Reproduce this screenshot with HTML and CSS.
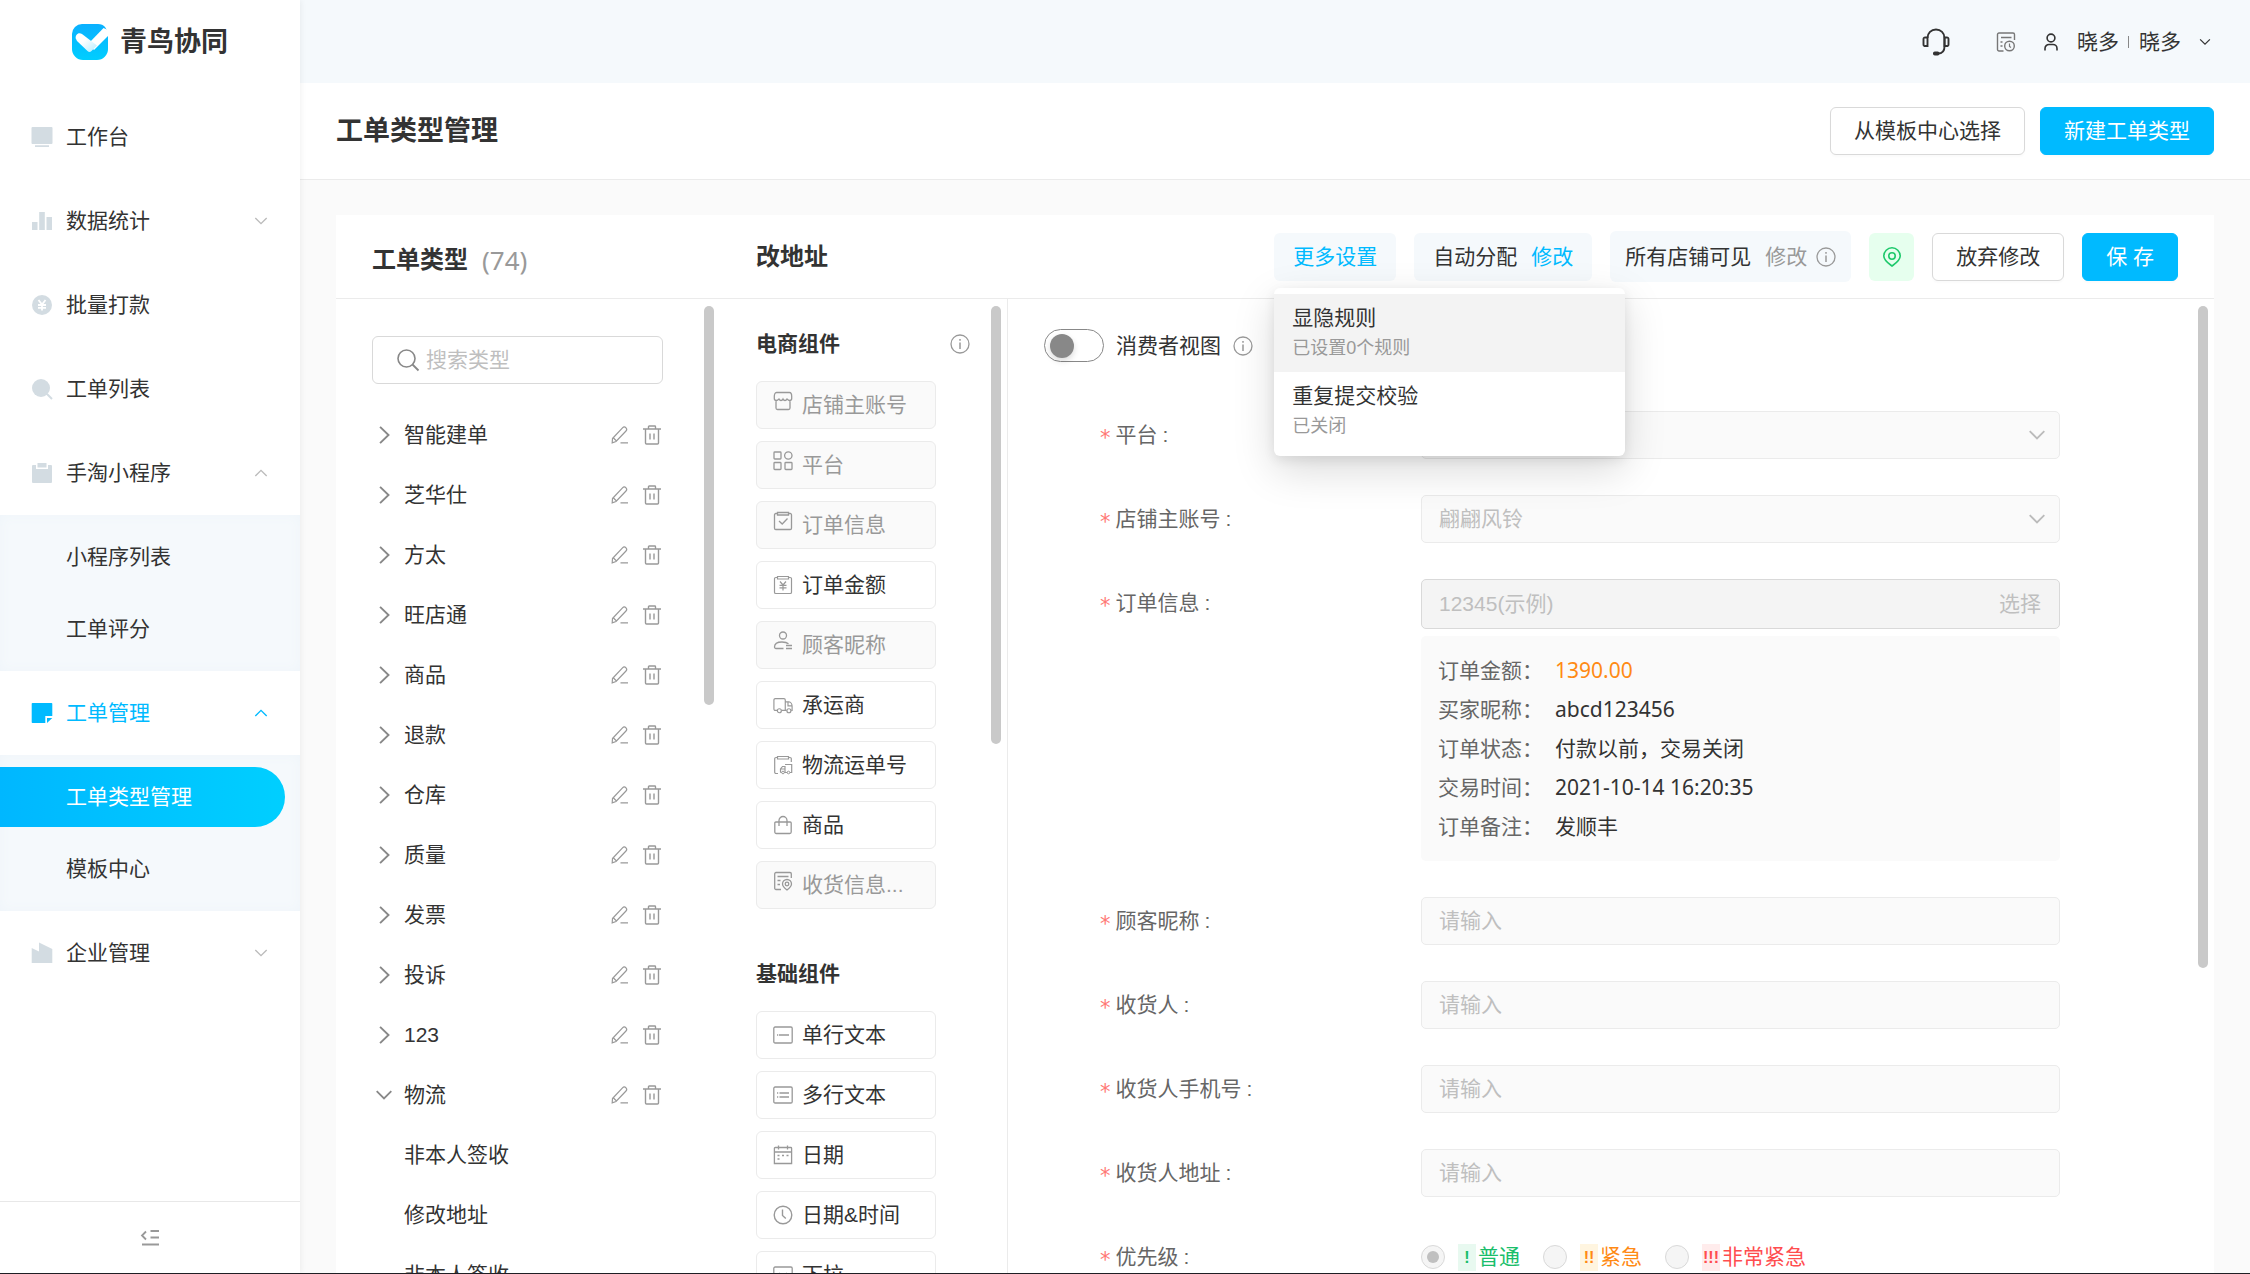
FILE: index.html
```html
<!DOCTYPE html>
<html lang="zh-CN">
<head>
<meta charset="utf-8">
<meta name="viewport" content="width=device-width, initial-scale=1">
<title>工单类型管理 - 青鸟协同</title>
<link rel="stylesheet" href="styles.css">
</head>
<body>
<svg class="sprite" aria-hidden="true">
  <defs>
    <linearGradient id="logo-bg" x1="0" y1="0" x2="0" y2="1"><stop offset="0" stop-color="#0ab0ff"/><stop offset="1" stop-color="#00ceff"/></linearGradient>
    <linearGradient id="logo-fold" x1="0" y1="0" x2="1" y2="1"><stop offset="0.4" stop-color="#fff"/><stop offset="1" stop-color="#b5ecff"/></linearGradient>
  </defs>
  <symbol id="i-logo" viewBox="0 0 36 36"><path d="M10 0H26C29 0 31.500 1 33 3L36 8V25A11 11 0 0 1 25 36H11A11 11 0 0 1 0 25V10A10 10 0 0 1 10 0Z" fill="url(#logo-bg)"/><path d="M31.500 4 36 6V12L22 26 16 20Z" fill="#fff"/><path d="M3.800 14.500C2.800 11 6.500 7.500 10 10L25 21.500 19.500 27A3 3 0 0 1 15.500 27L5 17Z" fill="url(#logo-fold)"/></symbol>
  <symbol id="i-desk" viewBox="0 0 22 22"><path d="M1.500 1h19a1 1 0 0 1 1 1v15a1 1 0 0 1-1 1h-19a1 1 0 0 1-1-1v-15a1 1 0 0 1 1-1ZM4 19.200h14v1.800h-14Z" fill="currentColor"/></symbol>
  <symbol id="i-chart" viewBox="0 0 22 22"><path d="M1 12h5.500v8h-5.500ZM8.200 2h5.600v18h-5.600ZM15.500 7h5.500v13h-5.500Z" fill="currentColor"/></symbol>
  <symbol id="i-coin" viewBox="0 0 22 22"><circle cx="11" cy="11" r="10" fill="currentColor"/><path d="M7.500 6l3.500 4.500L14.500 6M7 11h8M7 13.800h8M11 10.500V16.500" stroke="#fff" stroke-width="1.800" fill="none"/></symbol>
  <symbol id="i-find" viewBox="0 0 22 22"><circle cx="10" cy="10" r="9" fill="currentColor"/><path d="M16 16l5 5" stroke="currentColor" stroke-width="2"/></symbol>
  <symbol id="i-clip" viewBox="0 0 22 22"><path d="M2 3h3v4h12v-4h3a1 1 0 0 1 1 1v16a1 1 0 0 1-1 1h-18a1 1 0 0 1-1-1v-16a1 1 0 0 1 1-1ZM6.500 1h9v4.500h-9Z" fill="currentColor"/></symbol>
  <symbol id="i-note" viewBox="0 0 22 22"><path d="M1.500 1h19a.8.8 0 0 1 .8.800V14h-7v7h-12.800a.8.8 0 0 1-.8-.8v-18.400a.8.8 0 0 1 .8-.8ZM16 16h5.300L16 21Z" fill="currentColor"/></symbol>
  <symbol id="i-firm" viewBox="0 0 22 22"><path d="M.7 6 8 9.500V.5L21.300 7V21H.7Z" fill="currentColor"/></symbol>
  <symbol id="i-down" viewBox="0 0 16 16"><path d="M1.500 4.500 8 11 14.500 4.500" fill="none" stroke="currentColor" stroke-width="1.600"/></symbol>
  <symbol id="i-up" viewBox="0 0 16 16"><path d="M1.500 11.500 8 5 14.500 11.500" fill="none" stroke="currentColor" stroke-width="1.600"/></symbol>
  <symbol id="i-right" viewBox="0 0 16 16"><path d="M4.500 .8 12 8 4.500 15.200" fill="none" stroke="currentColor" stroke-width="1.700"/></symbol>
  <symbol id="i-fold" viewBox="0 0 20 20"><path d="M6 3.500 2 7.500 6 11.500M10.500 3H19M10.500 9.500H19M2 16.500H19" fill="none" stroke="currentColor" stroke-width="1.800"/></symbol>
  <symbol id="i-headset" viewBox="0 0 28 28"><path d="M5.500 10C5.500 5 9.200 1.500 14 1.500s8.500 3.500 8.500 8.500V18.500c0 4-2 7-6.500 7" fill="none" stroke="currentColor" stroke-width="1.900"/><path d="M5.500 9.500H3.500A1.500 1.500 0 0 0 1.500 11V16.500A1.500 1.500 0 0 0 3.500 18H5.500ZM22.500 9.500H24.500A1.500 1.500 0 0 1 26.500 11V16.500A1.500 1.500 0 0 1 24.500 18H22.500Z" fill="none" stroke="currentColor" stroke-width="1.900"/><rect x="11" y="23.500" width="6.500" height="4" rx="1.800" fill="currentColor"/></symbol>
  <symbol id="i-log" viewBox="0 0 20 20"><path d="M7.500 19H3A1.500 1.500 0 0 1 1.500 17.500V2.500A1.500 1.500 0 0 1 3 1H17A1.500 1.500 0 0 1 18.500 2.500V8M5 5.500H15.500M4.500 10H6.500M4.500 14H6.500" fill="none" stroke="currentColor" stroke-width="1.400"/><circle cx="13.500" cy="14" r="4.800" fill="none" stroke="currentColor" stroke-width="1.400"/><path d="M13.500 11.500V14.500L15 15.500" fill="none" stroke="currentColor" stroke-width="1.200"/></symbol>
  <symbol id="i-user" viewBox="0 0 16 18"><circle cx="8" cy="5" r="3.900" fill="none" stroke="currentColor" stroke-width="1.600"/><path d="M2 17.500V15.500A4 4 0 0 1 6 11.500H10A4 4 0 0 1 14 15.500V17.500" fill="none" stroke="currentColor" stroke-width="1.600"/></symbol>
  <symbol id="i-info" viewBox="0 0 20 20"><circle cx="10" cy="10" r="9" fill="none" stroke="currentColor" stroke-width="1.300"/><path d="M10 8.500V15M10 5V6.800" stroke="currentColor" stroke-width="1.500"/></symbol>
  <symbol id="i-search" viewBox="0 0 24 24"><circle cx="10.500" cy="10.500" r="8.500" fill="none" stroke="currentColor" stroke-width="1.600"/><path d="M16.500 16.500 22.500 22.500" stroke="currentColor" stroke-width="1.800"/></symbol>
  <symbol id="i-edit" viewBox="0 0 18 18"><path d="M1.500 12.500 11.500 1.800C12.500.8 14 .8 15 1.800S16 4 15 5L5 15.500 1.200 16.800ZM2.500 12 5.500 15M9.500 16.800H17" fill="none" stroke="currentColor" stroke-width="1.200"/></symbol>
  <symbol id="i-trash" viewBox="0 0 18 20"><path d="M0 4H18M5.500 4V1.700A.7.700 0 0 1 6.200 1H11.800A.7.700 0 0 1 12.500 1.700V4M2.500 4V18A1 1 0 0 0 3.500 19H14.500A1 1 0 0 0 15.500 18V4M7 8.500V14.500M11 8.500V14.500" fill="none" stroke="currentColor" stroke-width="1.400"/></symbol>
  <symbol id="i-shop" viewBox="0 0 20 20"><path d="M3.500 1.500H16.500C18 1.500 18.700 3.500 18.700 5.500V7.500C18.700 9 17.500 9.500 16.500 9.500S14.500 8.500 14 8C13.500 9 12.500 9.500 12 9.500S10.500 9 10 8C9.500 9 8.500 9.500 8 9.500S6.500 9 6 8C5.500 8.500 4.500 9.500 3.500 9.500S1.300 9 1.300 7.500V5.500C1.300 3.500 2 1.500 3.500 1.500ZM3 9.500V17A1.500 1.500 0 0 0 4.500 18.500H15.500A1.500 1.500 0 0 0 17 17V9.500" fill="none" stroke="currentColor" stroke-width="1.300"/></symbol>
  <symbol id="i-grid" viewBox="0 0 20 20"><g fill="none" stroke="currentColor" stroke-width="1.300"><rect x="1" y="1" width="7" height="7" rx=".8"/><circle cx="15.300" cy="4.500" r="3.700"/><rect x="1" y="11.500" width="7" height="7" rx=".8"/><rect x="12" y="11.500" width="7" height="7" rx=".8"/></g></symbol>
  <symbol id="i-order" viewBox="0 0 20 20"><path d="M4.500 1.500H15.500V4H4.500ZM4.500 2.500H2.800A1.300 1.300 0 0 0 1.500 3.800V17.200A1.300 1.300 0 0 0 2.800 18.500H17.200A1.300 1.300 0 0 0 18.500 17.200V3.800A1.300 1.300 0 0 0 17.200 2.500H15.500M6 10 9.200 13 14.500 7.500" fill="none" stroke="currentColor" stroke-width="1.300"/></symbol>
  <symbol id="i-money" viewBox="0 0 20 20"><path d="M4.500 1.500H15.500V4H4.500ZM4.500 2.500H2.800A1.300 1.300 0 0 0 1.500 3.800V17.200A1.300 1.300 0 0 0 2.800 18.500H17.200A1.300 1.300 0 0 0 18.500 17.200V3.800A1.300 1.300 0 0 0 17.200 2.500H15.500M7 6.500 10 10 13 6.500M6.500 10.300H13.500M6.500 12.800H13.500M10 10V15.500" fill="none" stroke="currentColor" stroke-width="1.200"/></symbol>
  <symbol id="i-buyer" viewBox="0 0 20 20"><circle cx="10" cy="4.500" r="3.500" fill="none" stroke="currentColor" stroke-width="1.300"/><path d="M10.500 17.500H3A1.500 1.500 0 0 1 1.500 16C1.500 12.500 5 11 9 11 12 11 14 11.500 15.500 12.800M13 14.500H19M13 17.500H19" fill="none" stroke="currentColor" stroke-width="1.300"/></symbol>
  <symbol id="i-truck" viewBox="0 0 22 20"><path d="M4.500 16H2.500A1.500 1.500 0 0 1 1 14.500V4.500A1.500 1.500 0 0 1 2.500 3H12A1.500 1.500 0 0 1 13.500 4.500V16H9.500M13.500 6.500H17.500C19.500 6.500 21 9 21 11.500V16H20M13.500 16H15M16.500 6.500V11H21" fill="none" stroke="currentColor" stroke-width="1.300"/><circle cx="7" cy="16.300" r="2.200" fill="none" stroke="currentColor" stroke-width="1.300"/><circle cx="17.500" cy="16.300" r="2.200" fill="none" stroke="currentColor" stroke-width="1.300"/></symbol>
  <symbol id="i-waybill" viewBox="0 0 20 20"><path d="M4.500 1.500H15.500V4H4.500ZM4.500 2.500H3A1.300 1.300 0 0 0 1.700 3.800V17.200A1.300 1.300 0 0 0 3 18.500H5M15.500 2.500H17A1.300 1.300 0 0 1 18.300 3.800V7M7.500 17.500V14L9.500 11.500H12V17.500M12 9.500H18.700V17.500H7.500M7.500 14H12" fill="none" stroke="currentColor" stroke-width="1.200"/><circle cx="10" cy="17.500" r="1.300" fill="#fff" stroke="currentColor"/><circle cx="15.500" cy="17.500" r="1.300" fill="#fff" stroke="currentColor"/></symbol>
  <symbol id="i-bag" viewBox="0 0 20 20"><path d="M2.800 7H17.200A1 1 0 0 1 18.200 8V17A1.500 1.500 0 0 1 16.700 18.500H3.300A1.500 1.500 0 0 1 1.800 17V8A1 1 0 0 1 2.800 7ZM6 11V5.500A4 4 0 0 1 14 5.500V11" fill="none" stroke="currentColor" stroke-width="1.300"/></symbol>
  <symbol id="i-receive" viewBox="0 0 20 20"><path d="M8 18.500H3A1.300 1.300 0 0 1 1.700 17.200V2.800A1.300 1.300 0 0 1 3 1.500H17A1.300 1.300 0 0 1 18.300 2.800V7M4.500 5.500H15.500M4.500 9.500H7.500M4.500 13.500H7M14 19C12 17.500 9.500 15.500 9.500 13A4.500 4.500 0 0 1 18.500 13C18.500 15.500 16 17.500 14 19Z" fill="none" stroke="currentColor" stroke-width="1.300"/><circle cx="14" cy="13" r="1.800" fill="none" stroke="currentColor" stroke-width="1.300"/></symbol>
  <symbol id="i-line" viewBox="0 0 20 20"><rect x=".8" y="2" width="18.400" height="16" rx="1.300" fill="none" stroke="currentColor" stroke-width="1.300"/><path d="M4 10H5.200M6 10H16" stroke="currentColor" stroke-width="1.400"/></symbol>
  <symbol id="i-lines" viewBox="0 0 20 20"><rect x=".8" y="2" width="18.400" height="16" rx="1.300" fill="none" stroke="currentColor" stroke-width="1.300"/><path d="M4 8H5.200M6.500 8H16M4 12H5.200M6.500 12H16" stroke="currentColor" stroke-width="1.400"/></symbol>
  <symbol id="i-date" viewBox="0 0 20 20"><path d="M2.200 2.500H17.800A.8.800 0 0 1 18.600 3.300V18.500H1.400V3.300A.8.800 0 0 1 2.200 2.500ZM1.400 7H18.600M5.500 .5V4.500M14.500 .5V4.500M4.500 10.500H6.500M9 10.500H11M13.500 10.500H15.500M4.500 14H6.500" fill="none" stroke="currentColor" stroke-width="1.300"/></symbol>
  <symbol id="i-clock" viewBox="0 0 20 20"><circle cx="10" cy="10" r="8.800" fill="none" stroke="currentColor" stroke-width="1.400"/><path d="M9.500 4.500V10.500L12.800 13.500" fill="none" stroke="currentColor" stroke-width="1.400"/></symbol>
  <symbol id="i-pulldown" viewBox="0 0 20 20"><rect x=".8" y="2" width="18.400" height="16" rx="1.300" fill="none" stroke="currentColor" stroke-width="1.300"/><path d="M6 8 10 12 14 8" fill="none" stroke="currentColor" stroke-width="1.400"/></symbol>
  <symbol id="i-pin" viewBox="0 0 20 20"><path d="M10 19C6.500 16.500 1.800 13.500 1.800 9A8.200 8.200 0 0 1 18.200 9C18.200 13.500 13.500 16.500 10 19Z" fill="none" stroke="currentColor" stroke-width="1.600"/><circle cx="10" cy="9" r="3.200" fill="none" stroke="currentColor" stroke-width="1.600"/></symbol>
</svg>

<div class="app">
  <aside class="sidebar">
    <a class="brand" href="#"><svg class="brand__logo"><use href="#i-logo"/></svg><span>青鸟协同</span></a>
    <nav class="nav" aria-label="主导航">
      <a class="nav__item" href="#"><svg class="nav__icon"><use href="#i-desk"/></svg><span>工作台</span></a>
      <a class="nav__item" href="#"><svg class="nav__icon"><use href="#i-chart"/></svg><span>数据统计</span><svg class="nav__arrow"><use href="#i-down"/></svg></a>
      <a class="nav__item" href="#"><svg class="nav__icon"><use href="#i-coin"/></svg><span>批量打款</span></a>
      <a class="nav__item" href="#"><svg class="nav__icon"><use href="#i-find"/></svg><span>工单列表</span></a>
      <a class="nav__item" href="#"><svg class="nav__icon"><use href="#i-clip"/></svg><span>手淘小程序</span><svg class="nav__arrow"><use href="#i-up"/></svg></a>
      <div class="subnav">
        <a class="subnav__item" href="#">小程序列表</a>
        <a class="subnav__item" href="#">工单评分</a>
      </div>
      <a class="nav__item nav__item--open" href="#"><svg class="nav__icon"><use href="#i-note"/></svg><span>工单管理</span><svg class="nav__arrow"><use href="#i-up"/></svg></a>
      <div class="subnav">
        <a class="subnav__item subnav__item--current" href="#" aria-current="page">工单类型管理</a>
        <a class="subnav__item" href="#">模板中心</a>
      </div>
      <a class="nav__item" href="#"><svg class="nav__icon"><use href="#i-firm"/></svg><span>企业管理</span><svg class="nav__arrow"><use href="#i-down"/></svg></a>
    </nav>
    <button class="sidebar__fold" type="button" aria-label="收起菜单"><svg class="icon"><use href="#i-fold"/></svg></button>
  </aside>

  <div class="page">
    <header class="topbar">
      <button class="icon-btn topbar__help" type="button" aria-label="客服"><svg class="icon--l"><use href="#i-headset"/></svg></button>
      <button class="icon-btn topbar__log" type="button" aria-label="操作记录"><svg class="icon"><use href="#i-log"/></svg></button>
      <button class="account" type="button"><svg class="account__user"><use href="#i-user"/></svg><span>晓多</span><span class="account__sep"></span><span>晓多</span><svg class="account__arrow"><use href="#i-down"/></svg></button>
    </header>

    <div class="titlebar">
      <h1 class="titlebar__title">工单类型管理</h1>
      <button class="btn" type="button">从模板中心选择</button>
      <button class="btn btn--primary" type="button">新建工单类型</button>
    </div>

    <main class="content">
      <section class="card">
        <div class="card__head">
          <div class="card__types"><h2 class="heading">工单类型</h2><span class="card__count">(74)</span></div>
          <h2 class="heading">改地址</h2>
          <div class="tools">
            <div class="more">
              <button class="chip chip--link" type="button" aria-expanded="true">更多设置</button>
              <div class="menu" role="menu">
                <button class="menu__item menu__item--hover" type="button" role="menuitem"><span class="menu__name">显隐规则</span><span class="menu__note">已设置0个规则</span></button>
                <button class="menu__item" type="button" role="menuitem"><span class="menu__name">重复提交校验</span><span class="menu__note">已关闭</span></button>
              </div>
            </div>
            <div class="chip"><span>自动分配</span><a class="chip__link" href="#">修改</a></div>
            <div class="chip chip--shops"><span>所有店铺可见</span><span class="chip__off">修改</span><svg class="icon icon--grey"><use href="#i-info"/></svg></div>
            <button class="pin" type="button" aria-label="定位"><svg class="icon"><use href="#i-pin"/></svg></button>
            <button class="btn" type="button">放弃修改</button>
            <button class="btn btn--primary" type="button">保 存</button>
          </div>
        </div>

        <div class="card__body">
          <div class="types">
            <label class="search"><svg class="search__icon"><use href="#i-search"/></svg><input class="search__input" type="text" placeholder="搜索类型" aria-label="搜索类型"></label>
            <ul class="tree">
              <li class="tree__row"><button class="tree__name" type="button"><svg class="tree__arrow"><use href="#i-right"/></svg>智能建单</button><button class="icon-btn" type="button" aria-label="编辑"><svg class="icon--s"><use href="#i-edit"/></svg></button><button class="icon-btn" type="button" aria-label="删除"><svg class="icon--s"><use href="#i-trash"/></svg></button></li>
              <li class="tree__row"><button class="tree__name" type="button"><svg class="tree__arrow"><use href="#i-right"/></svg>芝华仕</button><button class="icon-btn" type="button" aria-label="编辑"><svg class="icon--s"><use href="#i-edit"/></svg></button><button class="icon-btn" type="button" aria-label="删除"><svg class="icon--s"><use href="#i-trash"/></svg></button></li>
              <li class="tree__row"><button class="tree__name" type="button"><svg class="tree__arrow"><use href="#i-right"/></svg>方太</button><button class="icon-btn" type="button" aria-label="编辑"><svg class="icon--s"><use href="#i-edit"/></svg></button><button class="icon-btn" type="button" aria-label="删除"><svg class="icon--s"><use href="#i-trash"/></svg></button></li>
              <li class="tree__row"><button class="tree__name" type="button"><svg class="tree__arrow"><use href="#i-right"/></svg>旺店通</button><button class="icon-btn" type="button" aria-label="编辑"><svg class="icon--s"><use href="#i-edit"/></svg></button><button class="icon-btn" type="button" aria-label="删除"><svg class="icon--s"><use href="#i-trash"/></svg></button></li>
              <li class="tree__row"><button class="tree__name" type="button"><svg class="tree__arrow"><use href="#i-right"/></svg>商品</button><button class="icon-btn" type="button" aria-label="编辑"><svg class="icon--s"><use href="#i-edit"/></svg></button><button class="icon-btn" type="button" aria-label="删除"><svg class="icon--s"><use href="#i-trash"/></svg></button></li>
              <li class="tree__row"><button class="tree__name" type="button"><svg class="tree__arrow"><use href="#i-right"/></svg>退款</button><button class="icon-btn" type="button" aria-label="编辑"><svg class="icon--s"><use href="#i-edit"/></svg></button><button class="icon-btn" type="button" aria-label="删除"><svg class="icon--s"><use href="#i-trash"/></svg></button></li>
              <li class="tree__row"><button class="tree__name" type="button"><svg class="tree__arrow"><use href="#i-right"/></svg>仓库</button><button class="icon-btn" type="button" aria-label="编辑"><svg class="icon--s"><use href="#i-edit"/></svg></button><button class="icon-btn" type="button" aria-label="删除"><svg class="icon--s"><use href="#i-trash"/></svg></button></li>
              <li class="tree__row"><button class="tree__name" type="button"><svg class="tree__arrow"><use href="#i-right"/></svg>质量</button><button class="icon-btn" type="button" aria-label="编辑"><svg class="icon--s"><use href="#i-edit"/></svg></button><button class="icon-btn" type="button" aria-label="删除"><svg class="icon--s"><use href="#i-trash"/></svg></button></li>
              <li class="tree__row"><button class="tree__name" type="button"><svg class="tree__arrow"><use href="#i-right"/></svg>发票</button><button class="icon-btn" type="button" aria-label="编辑"><svg class="icon--s"><use href="#i-edit"/></svg></button><button class="icon-btn" type="button" aria-label="删除"><svg class="icon--s"><use href="#i-trash"/></svg></button></li>
              <li class="tree__row"><button class="tree__name" type="button"><svg class="tree__arrow"><use href="#i-right"/></svg>投诉</button><button class="icon-btn" type="button" aria-label="编辑"><svg class="icon--s"><use href="#i-edit"/></svg></button><button class="icon-btn" type="button" aria-label="删除"><svg class="icon--s"><use href="#i-trash"/></svg></button></li>
              <li class="tree__row"><button class="tree__name" type="button"><svg class="tree__arrow"><use href="#i-right"/></svg>123</button><button class="icon-btn" type="button" aria-label="编辑"><svg class="icon--s"><use href="#i-edit"/></svg></button><button class="icon-btn" type="button" aria-label="删除"><svg class="icon--s"><use href="#i-trash"/></svg></button></li>
              <li class="tree__row"><button class="tree__name" type="button"><svg class="tree__arrow"><use href="#i-down"/></svg>物流</button><button class="icon-btn" type="button" aria-label="编辑"><svg class="icon--s"><use href="#i-edit"/></svg></button><button class="icon-btn" type="button" aria-label="删除"><svg class="icon--s"><use href="#i-trash"/></svg></button></li>
              <li class="tree__row tree__row--leaf"><button class="tree__name" type="button">非本人签收</button></li>
              <li class="tree__row tree__row--leaf"><button class="tree__name" type="button">修改地址</button></li>
              <li class="tree__row tree__row--leaf"><button class="tree__name" type="button">非本人签收</button></li>
            </ul>
            <span class="thumb thumb--types"></span>
          </div>

          <div class="parts">
            <div class="parts__title"><h3 class="subheading">电商组件</h3><svg class="icon icon--grey"><use href="#i-info"/></svg></div>
            <div class="parts__list">
              <button class="part" type="button" disabled><svg class="icon"><use href="#i-shop"/></svg>店铺主账号</button>
              <button class="part" type="button" disabled><svg class="icon"><use href="#i-grid"/></svg>平台</button>
              <button class="part" type="button" disabled><svg class="icon"><use href="#i-order"/></svg>订单信息</button>
              <button class="part" type="button"><svg class="icon"><use href="#i-money"/></svg>订单金额</button>
              <button class="part" type="button" disabled><svg class="icon"><use href="#i-buyer"/></svg>顾客昵称</button>
              <button class="part" type="button"><svg class="icon"><use href="#i-truck"/></svg>承运商</button>
              <button class="part" type="button"><svg class="icon"><use href="#i-waybill"/></svg>物流运单号</button>
              <button class="part" type="button"><svg class="icon"><use href="#i-bag"/></svg>商品</button>
              <button class="part" type="button" disabled><svg class="icon"><use href="#i-receive"/></svg>收货信息...</button>
            </div>
            <div class="parts__title"><h3 class="subheading">基础组件</h3></div>
            <div class="parts__list">
              <button class="part" type="button"><svg class="icon"><use href="#i-line"/></svg>单行文本</button>
              <button class="part" type="button"><svg class="icon"><use href="#i-lines"/></svg>多行文本</button>
              <button class="part" type="button"><svg class="icon"><use href="#i-date"/></svg>日期</button>
              <button class="part" type="button"><svg class="icon"><use href="#i-clock"/></svg>日期&amp;时间</button>
              <button class="part" type="button"><svg class="icon"><use href="#i-pulldown"/></svg>下拉</button>
            </div>
            <span class="thumb thumb--parts"></span>
          </div>

          <div class="preview">
            <div class="view"><input class="switch" type="checkbox" role="switch" id="view"><label for="view">消费者视图</label><svg class="icon icon--grey"><use href="#i-info"/></svg></div>
            <form class="form">
              <div class="row"><label class="row__label" for="platform"><span class="star">*</span>平台<span>:</span></label>
                <div class="select"><select class="field" id="platform" disabled><option></option></select><svg class="select__arrow"><use href="#i-down"/></svg></div></div>
              <div class="row"><label class="row__label" for="shop"><span class="star">*</span>店铺主账号<span>:</span></label>
                <div class="select"><select class="field" id="shop" disabled><option>翩翩风铃</option></select><svg class="select__arrow"><use href="#i-down"/></svg></div></div>
              <div class="row"><label class="row__label" for="order"><span class="star">*</span>订单信息<span>:</span></label>
                <div class="order">
                  <div class="order__pick"><input class="order__input" id="order" type="text" value="12345(示例)" disabled><button class="order__btn" type="button" disabled>选择</button></div>
                  <dl class="order__info">
                    <dt>订单金额：</dt><dd class="order__sum">1390.00</dd>
                    <dt>买家昵称：</dt><dd>abcd123456</dd>
                    <dt>订单状态：</dt><dd>付款以前，交易关闭</dd>
                    <dt>交易时间：</dt><dd>2021-10-14 16:20:35</dd>
                    <dt>订单备注：</dt><dd>发顺丰</dd>
                  </dl>
                </div></div>
              <div class="row"><label class="row__label" for="nick"><span class="star">*</span>顾客昵称<span>:</span></label><input class="field" id="nick" type="text" placeholder="请输入" disabled></div>
              <div class="row"><label class="row__label" for="receiver"><span class="star">*</span>收货人<span>:</span></label><input class="field" id="receiver" type="text" placeholder="请输入" disabled></div>
              <div class="row"><label class="row__label" for="phone"><span class="star">*</span>收货人手机号<span>:</span></label><input class="field" id="phone" type="text" placeholder="请输入" disabled></div>
              <div class="row"><label class="row__label" for="address"><span class="star">*</span>收货人地址<span>:</span></label><input class="field" id="address" type="text" placeholder="请输入" disabled></div>
              <div class="row" role="radiogroup" aria-labelledby="level"><span class="row__label" id="level"><span class="star">*</span>优先级<span>:</span></span>
                <div class="levels">
                  <label class="level level--low"><input class="radio" type="radio" name="level" checked disabled><span class="level__mark">!</span>普通</label>
                  <label class="level level--mid"><input class="radio" type="radio" name="level" disabled><span class="level__mark">!!</span>紧急</label>
                  <label class="level level--high"><input class="radio" type="radio" name="level" disabled><span class="level__mark">!!!</span>非常紧急</label>
                </div></div>
            </form>
            <span class="thumb thumb--form"></span>
          </div>
        </div>
      </section>
    </main>
  </div>
</div>
</body>
</html>
```
FILE: styles.css
```css
:root {
  --blue: #00baff;
  --text: #333;
  --grey: #999;
  --line: #ebebeb;
  --tint: #f5f9fc;
}

* { box-sizing: border-box; }

body {
  margin: 0;
  color: var(--text);
  font: 21px/30px "Liberation Sans", "Noto Sans CJK SC", sans-serif;
}

button, input, select { font: inherit; color: inherit; }
button { margin: 0; padding: 0; border: 0; background: none; cursor: pointer; }
a { color: inherit; text-decoration: none; }
h1, h2, h3, ul, dl, dd { margin: 0; padding: 0; list-style: none; }

.sprite { position: absolute; width: 0; height: 0; }
.icon { width: 20px; height: 20px; flex: none; }
.icon--s { width: 18px; height: 20px; }
.icon--l { width: 28px; height: 28px; }
.icon--grey { color: var(--grey); }
.icon-btn { display: flex; flex: none; }

.app {
  display: flex;
  height: 100vh;
  overflow: hidden;
  border-bottom: 1px solid #1f1f24;
}

/* Sidebar */
.sidebar {
  z-index: 1;
  display: flex;
  flex: none;
  flex-direction: column;
  width: 300px;
  background: #fff;
  box-shadow: 1px 0 6px rgba(0, 0, 0, .06);
}
.brand {
  display: flex;
  align-items: center;
  gap: 12px;
  height: 83px;
  padding-left: 72px;
  font-size: 27px;
  font-weight: 700;
}
.brand__logo { width: 36px; height: 36px; }
.nav { flex: 1; padding-top: 12px; }
.nav__item {
  display: flex;
  align-items: center;
  height: 84px;
  padding: 0 32px 0 31px;
}
.nav__icon { width: 22px; height: 22px; margin-right: 13px; color: #d3dce2; }
.nav__arrow { width: 14px; height: 14px; margin-left: auto; color: #bbb; }
.nav__item--open,
.nav__item--open .nav__icon,
.nav__item--open .nav__arrow { color: var(--blue); }
.subnav {
  display: grid;
  gap: 12px;
  padding: 12px 0;
  background: var(--tint);
  box-shadow: inset 0 0 12px #eff5fa;
}
.subnav__item {
  width: 95%;
  height: 60px;
  padding-left: 66px;
  line-height: 60px;
}
.subnav__item--current {
  color: #fff;
  border-radius: 0 30px 30px 0;
  background: linear-gradient(90deg, #00b7ff, #00cfff);
}
.sidebar__fold {
  display: grid;
  place-items: center;
  height: 72px;
  border-top: 1px solid #e8e8e8;
  color: var(--grey);
}

/* Top area */
.page { display: flex; flex: 1; flex-direction: column; min-width: 0; }
.topbar {
  display: flex;
  flex: none;
  align-items: center;
  justify-content: flex-end;
  height: 83px;
  padding-right: 39px;
  background: var(--tint);
}
.topbar__help { margin-right: 46px; }
.topbar__log { margin-right: 27px; color: #777; }
.account { display: flex; align-items: center; }
.account__user { width: 16px; height: 20px; margin-right: 18px; }
.account__sep { width: 1px; height: 12px; margin: 0 10px 0 9px; background: #888; }
.account__arrow { width: 12px; height: 12px; margin-left: 18px; }
.titlebar {
  display: flex;
  flex: none;
  align-items: center;
  gap: 15px;
  height: 97px;
  padding: 0 36px;
  border-bottom: 1px solid var(--line);
  background: #fff;
}
.titlebar__title { margin-right: auto; font-size: 27px; line-height: 36px; }

.btn {
  height: 48px;
  padding: 0 23px;
  border: 1px solid #d9d9d9;
  border-radius: 6px;
  background: #fff;
  box-shadow: 0 2px 2px rgba(0, 0, 0, .02);
  white-space: nowrap;
}
.btn--primary { border-color: var(--blue); background: var(--blue); color: #fff; }

/* Card */
.content {
  display: flex;
  flex: 1;
  min-height: 0;
  padding: 35px 36px 0;
  background: #fafafa;
}
.card { display: flex; flex: 1; flex-direction: column; min-width: 0; background: #fff; }
.card__head {
  display: flex;
  flex: none;
  align-items: center;
  height: 84px;
  border-bottom: 1px solid var(--line);
}
.card__types { display: flex; gap: 14px; width: 420px; padding: 6px 0 0 36px; }
.heading { font-size: 24px; line-height: 30px; }
.card__count { font-family: "Noto Sans", sans-serif; font-size: 26px; color: var(--grey); }
.tools { display: flex; align-items: center; gap: 18px; margin-left: auto; padding-right: 36px; }
.chip {
  display: flex;
  align-items: center;
  gap: 14px;
  height: 48px;
  padding: 0 19px;
  border-radius: 6px;
  background: var(--tint);
  white-space: nowrap;
}
.chip--link, .chip__link { color: var(--blue); }
.chip--shops { gap: 9px; height: 51px; padding: 0 15px; }
.chip__off { margin-left: 5px; color: var(--grey); }
.pin {
  display: grid;
  place-items: center;
  width: 45px;
  height: 48px;
  border-radius: 6px;
  background: #e6ffee;
  color: #1ec96b;
}

.more { position: relative; }
.menu {
  position: absolute;
  z-index: 2;
  top: 55px;
  left: 0;
  width: 351px;
  padding: 6px 0;
  border-radius: 6px;
  background: #fff;
  box-shadow: 0 14px 42px rgba(0, 0, 0, .15), 0 4px 12px rgba(0, 0, 0, .08);
}
.menu__item { display: block; width: 100%; padding: 9px 18px; text-align: left; }
.menu__item--hover { background: #f3f3f3; }
.menu__name, .menu__note { display: block; }
.menu__note { font-size: 18px; color: var(--grey); }

.card__body { display: flex; flex: 1; min-height: 0; }
.types, .parts, .preview { position: relative; overflow: hidden; }
.thumb {
  position: absolute;
  top: 7px;
  right: 6px;
  width: 10px;
  border-radius: 5px;
  background: #c9c9c9;
}
.thumb--types { height: 41%; }
.thumb--parts { height: 45%; }
.thumb--form { height: 68%; }

/* Type tree */
.types { flex: none; width: 384px; padding: 37px 57px 0 36px; }
.search {
  display: flex;
  align-items: center;
  gap: 6px;
  height: 48px;
  padding: 0 23px;
  border: 1px solid #d9d9d9;
  border-radius: 6px;
}
.search__icon { width: 24px; height: 24px; flex: none; color: #888; }
.search__input { width: 100%; min-width: 0; padding: 0; border: 0; outline: 0; background: none; }
.search__input::placeholder { color: #bfbfbf; }
.tree { padding: 21px 2px 0 0; }
.tree__row { display: flex; align-items: center; gap: 14px; height: 60px; color: var(--grey); }
.tree__row--leaf { padding-left: 32px; }
.tree__name { display: flex; flex: 1; align-items: center; padding-left: 3px; color: var(--text); }
.tree__row--leaf .tree__name { padding-left: 0; }
.tree__arrow { width: 18px; height: 18px; margin-right: 11px; color: #888; }

/* Components */
.parts { flex: none; width: 288px; padding: 30px 37px 0 36px; border-right: 1px solid var(--line); }
.parts__title { display: flex; align-items: center; justify-content: space-between; margin-bottom: 22px; }
.subheading { font-size: 21px; }
.parts__list { display: grid; gap: 12px; width: 180px; margin-bottom: 50px; }
.part {
  display: flex;
  align-items: center;
  gap: 9px;
  height: 48px;
  padding-left: 16px;
  border: 1px solid var(--line);
  border-radius: 6px;
  white-space: nowrap;
}
.part .icon { color: var(--grey); }
.part:disabled { background: #fafafa; color: var(--grey); }
.part:disabled .icon { margin-bottom: 8px; }

/* Form preview */
.preview { flex: 1; min-width: 0; padding: 30px 154px 0 36px; }
.view { display: flex; align-items: center; gap: 12px; height: 33px; margin-bottom: 49px; }
.switch {
  display: flex;
  align-items: center;
  appearance: none;
  width: 60px;
  height: 33px;
  margin: 0;
  padding-left: 5px;
  border: 1px solid #888;
  border-radius: 17px;
}
.switch::before {
  width: 24px;
  height: 24px;
  border-radius: 50%;
  background: #888;
  box-shadow: 0 3px 6px rgba(0, 0, 0, .15);
  content: "";
}
.form { display: grid; gap: 36px; padding-left: 56px; }
.row { display: grid; grid-template-columns: 321px minmax(0, 1fr); }
.row__label { display: flex; gap: 5px; color: #666; line-height: 48px; }
.star { height: 48px; padding-top: 3px; color: #ff7875; font-family: "DejaVu Sans", sans-serif; }
.field {
  appearance: none;
  width: 100%;
  height: 48px;
  margin: 0;
  padding: 0 17px;
  border: 1px solid var(--line);
  border-radius: 5px;
  background: #fafafa;
  color: #bfbfbf;
  opacity: 1;
}
.field::placeholder { color: #bfbfbf; }
.select { display: grid; align-items: center; }
.select > * { grid-area: 1 / 1; }
.select__arrow { width: 18px; height: 18px; margin-right: 14px; justify-self: end; color: #bbb; }
.order { display: grid; gap: 7px; }
.order__pick {
  display: flex;
  height: 50px;
  padding: 0 18px 0 17px;
  border: 1px solid #d9d9d9;
  border-radius: 5px;
  background: #f4f4f4;
  color: #bfbfbf;
}
.order__input {
  flex: 1;
  min-width: 0;
  padding: 0;
  border: 0;
  background: none;
}
.order__info {
  display: grid;
  grid-template-columns: 117px 1fr;
  padding: 15px 17px;
  border-radius: 5px;
  background: #fafafa;
  font-family: "Noto Sans", "Noto Sans CJK SC", sans-serif;
  line-height: 39px;
}
.order__info dt { color: #666; }
.order__info .order__sum { color: #ff8a14; }
.levels { display: flex; align-items: center; gap: 23px; }
.level { display: flex; align-items: center; gap: 2px; }
.level__mark { width: 18px; text-align: center; font: 700 16px/27px "Liberation Sans", sans-serif; }
.level--low { color: #19be6b; }
.level--low .level__mark { background: #e8f9f0; }
.level--mid { color: #ff8a14; }
.level--mid .level__mark { background: #fff5e0; }
.level--high { color: #ff4d4f; }
.level--high .level__mark { background: #ffecec; }
.radio {
  display: grid;
  place-items: center;
  appearance: none;
  width: 24px;
  height: 24px;
  margin: 0 11px 0 0;
  border: 1px solid #d9d9d9;
  border-radius: 50%;
  background: #f5f5f5;
}
.radio:checked::before { width: 12px; height: 12px; border-radius: 50%; background: #c0c0c0; content: ""; }
```
